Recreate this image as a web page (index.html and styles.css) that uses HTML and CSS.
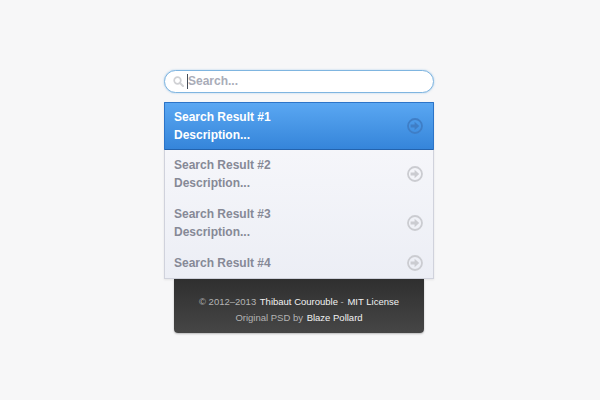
FILE: index.html
```html
<!DOCTYPE html>
<html>
<head>
    <title>Search</title>
    <link rel="stylesheet" href="styles.css">
</head>
<body>
    <div class="container">
        <div class="search">
            <svg class="search-icon" width="11" height="11" viewBox="0 0 11 11">
                <circle cx="4.5" cy="4.5" r="3.3" fill="none" stroke="#d0d1d4" stroke-width="1.7"/>
                <path d="M7 7l3 3" stroke="#d0d1d4" stroke-width="2" stroke-linecap="round"/>
            </svg>
            <span class="caret"></span>
            <span class="placeholder">Search...</span>
        </div>

        <ul class="results">
            <li class="result active">
                <div class="result-text">
                    <div>Search Result #1</div>
                    <div>Description...</div>
                </div>
                <svg class="arrow" width="16" height="16" viewBox="0 0 16 16">
                    <circle cx="8" cy="8" r="7" fill="none" stroke="currentColor" stroke-width="1.8"/>
                    <path d="M3.6 6.5h4V3.8L12.2 8l-4.6 4.2V9.5h-4z" fill="currentColor"/>
                </svg>
            </li>
            <li class="result">
                <div class="result-text">
                    <div>Search Result #2</div>
                    <div>Description...</div>
                </div>
                <svg class="arrow" width="16" height="16" viewBox="0 0 16 16">
                    <circle cx="8" cy="8" r="7" fill="none" stroke="currentColor" stroke-width="1.8"/>
                    <path d="M3.6 6.5h4V3.8L12.2 8l-4.6 4.2V9.5h-4z" fill="currentColor"/>
                </svg>
            </li>
            <li class="result">
                <div class="result-text">
                    <div>Search Result #3</div>
                    <div>Description...</div>
                </div>
                <svg class="arrow" width="16" height="16" viewBox="0 0 16 16">
                    <circle cx="8" cy="8" r="7" fill="none" stroke="currentColor" stroke-width="1.8"/>
                    <path d="M3.6 6.5h4V3.8L12.2 8l-4.6 4.2V9.5h-4z" fill="currentColor"/>
                </svg>
            </li>
            <li class="result">
                <div class="result-text">
                    <div>Search Result #4</div>
                </div>
                <svg class="arrow" width="16" height="16" viewBox="0 0 16 16">
                    <circle cx="8" cy="8" r="7" fill="none" stroke="currentColor" stroke-width="1.8"/>
                    <path d="M3.6 6.5h4V3.8L12.2 8l-4.6 4.2V9.5h-4z" fill="currentColor"/>
                </svg>
            </li>
        </ul>

        <div class="credits">
            <p>© 2012–2013 <a href="#">Thibaut Courouble</a> - <a href="#">MIT License</a></p>
            <p>Original PSD by <a href="#">Blaze Pollard</a></p>
        </div>
    </div>
</body>
</html>
```
FILE: styles.css
```css
* {
    margin: 0;
    padding: 0;
    box-sizing: border-box;
}

body {
    min-height: 400px;
    padding: 70px 0 0 164px;
    background: #f7f7f8;
    font-family: "Liberation Sans", Arial, sans-serif;
}

.container {
    width: 270px;
}

.search {
    display: flex;
    align-items: center;
    height: 23px;
    padding-left: 8px;
    background: #fff;
    border: 1px solid #7fb5e0;
    border-radius: 12px;
    box-shadow: 0 0 2px rgba(90, 160, 220, 0.5);
}

.search-icon {
    margin-right: 3px;
}

.caret {
    width: 1px;
    height: 15px;
    background: #444c58;
}

.placeholder {
    padding-bottom: 2px;
    font-size: 12px;
    font-weight: bold;
    color: #a9acb8;
}

.results {
    list-style: none;
    margin-top: 9px;
    background: linear-gradient(#f9f9fc, #eceef5);
    border: 1px solid #d0d2dc;
    border-top: none;
    box-shadow: 0 1px 2px rgba(0, 0, 0, 0.08);
}

.result {
    display: flex;
    align-items: center;
    justify-content: space-between;
    padding: 6px 10px 7px 9px;
    font-size: 12px;
    font-weight: bold;
    line-height: 18px;
    color: #868996;
}

.result:last-child {
    padding-bottom: 6px;
}

.result .arrow {
    color: #cbccd1;
}

.result.active {
    margin: 0 -1px;
    padding: 5px 10px 5px 9px;
    color: #fff;
    background: linear-gradient(#5aa7f2, #3585da);
    border: 1px solid #2c74c8;
    border-bottom-color: #2363ae;
    border-radius: 1px;
}

.result.active .arrow {
    color: #3f7ec6;
}

.credits {
    margin: 0 10px;
    height: 54px;
    padding-top: 15px;
    background: linear-gradient(#2f2f2f, #464646);
    border-radius: 0 0 4px 4px;
    box-shadow: 0 1px 2px rgba(0, 0, 0, 0.25);
    font-size: 9.5px;
    line-height: 16px;
    text-align: center;
    color: #b4b4b4;
}

.credits a {
    margin-left: 1px;
    color: #f1f1f1;
    text-decoration: none;
}
```
